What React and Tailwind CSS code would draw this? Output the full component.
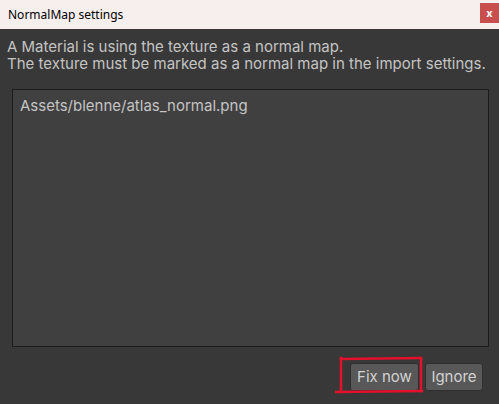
export default function App() {
  return (
    <div className="flex h-[404px] w-[499px] flex-col overflow-hidden bg-[#383838] font-['Inter','Noto_Sans',sans-serif]">
      <div className="flex h-[29px] shrink-0 items-center justify-between bg-[#f7efee] pl-2">
        <span className="font-['Noto_Sans','Open_Sans',sans-serif] text-[12px] text-black">NormalMap settings</span>
        <button className="mb-[3px] flex h-5 w-[19px] items-center justify-center bg-[#c94f4f] text-[11px] font-bold leading-none text-white">
          x
        </button>
      </div>
      <div className="flex flex-1 flex-col px-[12px] pt-[9px]">
        <p className="-ml-[5px] whitespace-nowrap text-[15px] leading-[17px] text-[#c4c4c4]">
          A Material is using the texture as a normal map.
          <br />
          The texture must be marked as a normal map in the import settings.
        </p>
        <div className="mt-[17px] h-[258px] w-[477px] border border-[#1b1b1b] bg-[#404040] px-[7px] pt-[3px]">
          <span className="text-[15px] leading-[17px] text-[#c4c4c4]">Assets/blenne/atlas_normal.png</span>
        </div>
        <div className="relative mt-[16px] flex justify-end gap-[6px] pr-[4px]">
          <button className="h-[28px] w-[69px] rounded-[3px] border border-[#303030] bg-[#585858] text-[15px] text-[#d2d2d2]">
            Fix now
          </button>
          <button className="h-[28px] w-[58px] rounded-[3px] border border-[#303030] bg-[#585858] text-[15px] text-[#d2d2d2]">
            Ignore
          </button>
          <svg className="pointer-events-none absolute left-[323px] top-[-7px]" width="92" height="40" viewBox="0 0 92 40">
            <g stroke="#e3112b" strokeWidth="2.5" fill="none" strokeLinecap="square">
              <path d="M6 3 L86 2" />
              <path d="M6 2 L6 36" />
              <path d="M86 2 L86 35" />
              <path d="M1 36 L87 35" />
            </g>
          </svg>
        </div>
      </div>
    </div>
  );
}
